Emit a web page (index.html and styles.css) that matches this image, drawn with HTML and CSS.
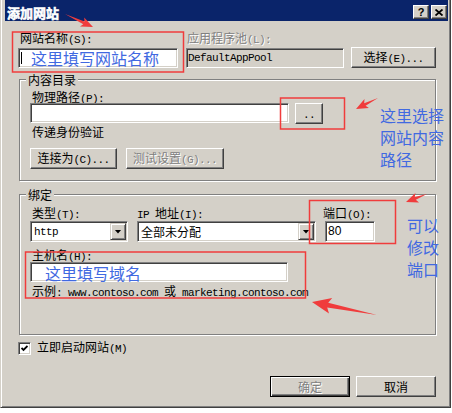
FILE: index.html
```html
<!DOCTYPE html>
<html lang="zh-CN">
<head>
    <meta charset="UTF-8">
    <meta name="viewport" content="width=device-width, initial-scale=1.0">
    <title>添加网站</title>
    <link rel="stylesheet" href="styles.css">
</head>
<body>
    <div class="window">
        <div class="titlebar">
            <span class="title">添加网站</span>
            <div class="caption-buttons">
                <span class="caption-btn">?</span>
                <span class="caption-btn">
                    <svg width="8" height="7" viewBox="0 0 8 7"><path d="M0.5 0.5l7 6M7.5 0.5l-7 6" stroke="#000" stroke-width="1.8"/></svg>
                </span>
            </div>
        </div>

        <!-- nombre del sitio + grupo de aplicaciones -->
        <div class="site-row">
            <div class="site-name">
                <div class="label">网站名称<span class="en">(S):</span></div>
                <div class="field"><span class="caret"></span><span class="hint">这里填写网站名称</span></div>
            </div>
            <div class="app-pool">
                <div class="label disabled">应用程序池<span class="en">(L):</span></div>
                <div class="field readonly"><span class="en">DefaultAppPool</span></div>
            </div>
            <button class="btn btn-select">选择<span class="en">(E)...</span></button>
        </div>

        <fieldset class="group group-content">
            <legend>内容目录</legend>
            <div class="group-body">
                <div class="label">物理路径<span class="en">(P):</span></div>
                <div class="path-row">
                    <div class="field path-field"></div>
                    <button class="btn btn-browse"><span class="en">..</span></button>
                </div>
                <div class="label label-auth">传递身份验证</div>
                <div class="btn-row">
                    <button class="btn btn-connect">连接为<span class="en">(C)...</span></button>
                    <button class="btn btn-test" disabled>测试设置<span class="en">(G)...</span></button>
                </div>
            </div>
        </fieldset>

        <fieldset class="group group-binding">
            <legend>绑定</legend>
            <div class="group-body">
                <div class="binding-row">
                    <div class="col-type">
                        <div class="label">类型<span class="en">(T):</span></div>
                        <div class="select"><span class="en">http</span><span class="drop"></span></div>
                    </div>
                    <div class="col-ip">
                        <div class="label"><span class="en">IP </span>地址<span class="en">(I):</span></div>
                        <div class="select"><span>全部未分配</span><span class="drop"></span></div>
                    </div>
                    <div class="col-port">
                        <div class="label">端口<span class="en">(O):</span></div>
                        <div class="field port-field">80</div>
                    </div>
                </div>
                <div class="label label-host">主机名<span class="en">(H):</span></div>
                <div class="field host-field"><span class="hint">这里填写域名</span></div>
                <div class="label example">示例<span class="en">: www.contoso.com </span>或<span class="en"> marketing.contoso.com</span></div>
            </div>
        </fieldset>

        <div class="check-row">
            <span class="checkbox">
                <svg width="7" height="7" viewBox="0 0 7 7"><path d="M0.5 3l2 2 4-4" stroke="#000" stroke-width="1.8" fill="none"/></svg>
            </span>
            <span>立即启动网站<span class="en">(M)</span></span>
        </div>

        <div class="dialog-buttons">
            <button class="btn btn-default" disabled>确定</button>
            <button class="btn">取消</button>
        </div>
    </div>

    <!-- anotaciones dibujadas encima de la captura -->
    <svg class="marks" width="452" height="413" viewBox="0 0 452 413">
        <g fill="none" stroke="#f03c3c" stroke-width="1.5">
            <rect x="12.5" y="32" width="171" height="40"/>
            <rect x="280.5" y="98" width="64" height="31"/>
            <rect x="309.5" y="200.5" width="86" height="43"/>
            <rect x="25.5" y="252" width="280" height="46"/>
        </g>
        <g fill="#f03c3c">
            <polygon points="65,14 84.5,21.4 84.2,17.4 93,27 80,26.4 83.3,24.2"/>
            <polygon points="378,98 364.2,103.2 364.5,99.1 356,109 368.9,108.1 365.6,105.8"/>
            <polygon points="427,194 414.8,197 415.4,193 406,202 419,202.4 415.8,199.8"/>
            <polygon points="377,315 328.2,302.7 332.2,297.9 312,302 329,313.5 327.2,307.6"/>
        </g>
    </svg>
    <div class="note note-path">这里选择<br>网站内容<br>路径</div>
    <div class="note note-port">可以<br>修改<br>端口</div>
</body>
</html>
```

FILE: styles.css
```css
body {
    margin: 0;
    position: relative;
    background-color: #ffffff;
    font-family: "Noto Sans CJK SC", sans-serif;
    font-size: 12px;
    color: #000000;
}
.window {
    width: 451px;
    height: 408px;
    box-sizing: border-box;
    padding: 0 2px 0 4px;
    background-color: #d4d0c8;
    border-left: 1px solid #d4d0c8;
    border-right: 1px solid #404040;
    border-bottom: 1px solid #404040;
    box-shadow: inset 1px 0 #ffffff, inset -1px -1px #808080;
}
.titlebar {
    display: flex;
    justify-content: space-between;
    height: 21px;
    background-color: #0a246a;
}
.title {
    padding: 5px 0 0 2px;
    line-height: 15px;
    font-size: 13px;
    font-weight: bold;
    color: #ffffff;
    -webkit-text-stroke: 0.6px #ffffff;
}
.caption-buttons {
    display: flex;
    gap: 2px;
    margin: 5px 1px 0 0;
}
.caption-btn {
    display: flex;
    align-items: center;
    justify-content: center;
    width: 16px;
    height: 14px;
    box-sizing: border-box;
    background-color: #d4d0c8;
    border: 1px solid;
    border-color: #ffffff #404040 #404040 #ffffff;
    box-shadow: inset -1px -1px #808080;
    font-family: "Liberation Sans", sans-serif;
    font-size: 11px;
    font-weight: bold;
    line-height: 1;
}
.en {
    font-family: "Liberation Mono", monospace;
    font-size: 11px;
    letter-spacing: -0.6px;
    white-space: pre;
}
.label {
    height: 12px;
    line-height: 12px;
    padding-left: 2px;
    white-space: nowrap;
}
.disabled {
    color: #808080;
    text-shadow: 1px 1px #ffffff;
}
.field {
    height: 20px;
    box-sizing: border-box;
    background-color: #ffffff;
    border: 1px solid;
    border-color: #808080 #ffffff #ffffff #808080;
    box-shadow: inset 1px 1px #404040, inset -1px -1px #d4d0c8;
}
.hint {
    display: block;
    height: 16px;
    font-size: 16px;
    line-height: 16px;
    color: #4169e1;
}
.btn {
    height: 21px;
    padding: 0;
    box-sizing: border-box;
    background-color: #d4d0c8;
    border: 1px solid;
    border-color: #ffffff #404040 #404040 #ffffff;
    box-shadow: inset -1px -1px #808080;
    font: inherit;
    line-height: 12px;
    color: #000000;
}
.btn:disabled {
    color: #808080;
    text-shadow: 1px 1px #ffffff;
}

.site-row {
    display: flex;
    align-items: flex-end;
    margin-top: 11px;
    padding-left: 13px;
}
.site-name {
    width: 160px;
}
.site-name .label,
.app-pool .label {
    margin-bottom: 4px;
}
.site-name .field {
    display: flex;
    align-items: center;
    padding-left: 2px;
}
.caret {
    width: 1px;
    height: 12px;
    background-color: #000000;
}
.site-name .hint {
    margin-left: 9px;
}
.app-pool {
    width: 158px;
    margin-left: 8px;
}
.app-pool .label {
    padding-left: 1px;
}
.readonly {
    display: flex;
    align-items: center;
    padding-left: 1px;
    background-color: #d4d0c8;
}
.btn-select {
    width: 85px;
    margin-left: 7px;
}

.group {
    width: 417px;
    margin: 0 0 0 14px;
    padding: 0 0 0 6px;
    box-sizing: border-box;
    min-width: 0;
    border: 1px solid #808080;
    box-shadow: inset 1px 1px #ffffff, 1px 1px #ffffff;
}
.group legend {
    padding: 0 2px;
    line-height: 15px;
    background-color: #d4d0c8;
}
.group-content {
    margin-top: 4px;
    padding-bottom: 11px;
}
.group-binding {
    margin-top: 6px;
    padding-bottom: 37px;
}
.group-body {
    padding: 4px 0 0 4px;
}
.group-binding .group-body {
    padding-top: 5px;
}
.path-row {
    display: flex;
    gap: 6px;
}
.path-field {
    width: 259px;
}
.btn-browse {
    width: 28px;
}
.label-auth {
    margin-top: 2px;
}
.btn-row {
    display: flex;
    gap: 9px;
    margin-top: 10px;
}
.btn-connect {
    width: 87px;
}
.btn-test {
    width: 98px;
}

.binding-row {
    display: flex;
}
.binding-row .select,
.binding-row .field {
    margin-top: 2px;
}
.col-type {
    width: 98px;
}
.col-ip {
    width: 179px;
    margin-left: 9px;
}
.col-ip .label,
.col-port .label {
    padding-left: 0;
}
.col-port {
    width: 52px;
    margin-left: 7px;
}
.select {
    display: flex;
    align-items: center;
    justify-content: space-between;
    height: 21px;
    box-sizing: border-box;
    padding: 2px;
    background-color: #ffffff;
    border: 1px solid;
    border-color: #808080 #ffffff #ffffff #808080;
    box-shadow: inset 1px 1px #404040, inset -1px -1px #d4d0c8;
}
.select > span:first-child {
    padding-left: 1px;
    line-height: 12px;
}
.drop {
    display: flex;
    align-items: center;
    justify-content: center;
    width: 16px;
    height: 17px;
    margin-right: -1px;
    box-sizing: border-box;
    background-color: #d4d0c8;
    border: 1px solid;
    border-color: #d4d0c8 #404040 #404040 #d4d0c8;
    box-shadow: inset 1px 1px #ffffff, inset -1px -1px #808080;
}
.drop::after {
    content: "";
    width: 7px;
    height: 4px;
    background-color: #000000;
    clip-path: polygon(0 0, 100% 0, 50% 100%);
}
.port-field {
    width: 50px;
    height: 21px;
    margin-left: 2px;
    padding-left: 2px;
    line-height: 19px;
    font-family: "Liberation Sans", sans-serif;
    font-size: 12px;
}
.label-host {
    margin-top: 7px;
}
.host-field {
    width: 258px;
    margin-top: 1px;
    padding: 2px 0 0 14px;
}
.example {
    margin-top: 3px;
}

.check-row {
    display: flex;
    align-items: center;
    gap: 6px;
    margin-top: 5px;
    padding-left: 13px;
    line-height: 13px;
}
.checkbox {
    display: flex;
    align-items: center;
    justify-content: center;
    width: 13px;
    height: 13px;
    box-sizing: border-box;
    background-color: #ffffff;
    border: 1px solid;
    border-color: #808080 #ffffff #ffffff #808080;
    box-shadow: inset 1px 1px #404040, inset -1px -1px #d4d0c8;
}
.dialog-buttons {
    display: flex;
    justify-content: flex-end;
    gap: 6px;
    margin-top: 20px;
    padding-right: 12px;
}
.dialog-buttons .btn {
    width: 80px;
}
.btn-default {
    border-color: #000000;
    box-shadow: inset 1px 1px #ffffff, inset -1px -1px #404040, inset -2px -2px #808080;
}

.marks {
    position: absolute;
    left: 0;
    top: 0;
    pointer-events: none;
}
.note {
    position: absolute;
    font-size: 16px;
    line-height: 22px;
    color: #4169e1;
}
.note-path {
    left: 380px;
    top: 104px;
}
.note-port {
    left: 407px;
    top: 214px;
}
```
